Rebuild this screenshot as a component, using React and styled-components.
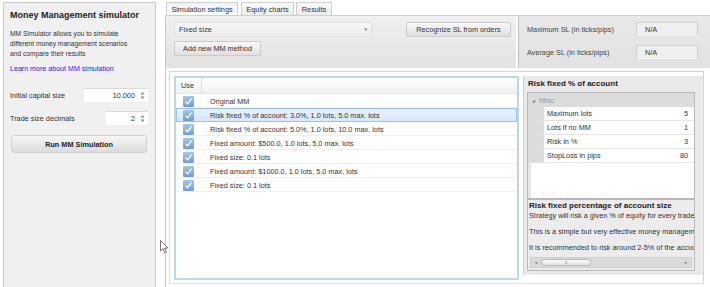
import React from "react";
import styled, { createGlobalStyle } from "styled-components";

const GlobalStyle = createGlobalStyle`
  html, body {
    margin: 0;
    padding: 0;
    background: #ffffff;
  }
  body {
    font-family: "Liberation Sans", Arial, sans-serif;
    font-size: 7.3px;
    color: #333;
    width: 710px;
    height: 287px;
    overflow: hidden;
  }
`;

const rows = [
  { text: "Original MM" },
  { text: "Risk fixed % of account: 3.0%, 1.0 lots, 5.0 max. lots", selected: true },
  { text: "Risk fixed % of account: 5.0%, 1.0 lots, 10.0 max. lots" },
  { text: "Fixed amount: $500.0, 1.0 lots, 5.0 max. lots" },
  { text: "Fixed size: 0.1 lots" },
  { text: "Fixed amount: $1000.0, 1.0 lots, 5.0 max. lots" },
  { text: "Fixed size: 0.1 lots" },
];

const props = [
  { name: "Maximum lots", value: "5" },
  { name: "Lots if no MM", value: "1" },
  { name: "Risk in %", value: "3" },
  { name: "StopLoss in pips", value: "80" },
];

function Spin() {
  return (
    <SpinArrows viewBox="0 0 5 9">
      <path d="M2.5 1 L4.5 3.6 H0.5 Z M2.5 8 L4.5 5.4 H0.5 Z" fill="#888" />
    </SpinArrows>
  );
}

function Check() {
  return (
    <CheckBox>
      <svg width="11" height="11" viewBox="0 0 11 11">
        <path d="M2.6 5.8 L4.6 7.8 L8.6 2.6" stroke="#fff" strokeWidth="1.3" fill="none" />
      </svg>
    </CheckBox>
  );
}

function App() {
  return (
    <>
      <GlobalStyle />
      <Page>
        <LeftPanel>
          <Title>Money Management simulator</Title>
          <Intro>
            MM Simulator allows you to simulate
            <br />
            different money management scenarios
            <br />
            and compare their results
          </Intro>
          <Link>Learn more about MM simulation</Link>
          <FieldRow $top={14}>
            <span>Initial capital size</span>
            <NumberBox $w={64}>
              10,000
              <Spin />
            </NumberBox>
          </FieldRow>
          <FieldRow $top={9}>
            <span>Trade size decimals</span>
            <NumberBox $w={42}>
              2
              <Spin />
            </NumberBox>
          </FieldRow>
          <RunButton>Run MM Simulation</RunButton>
        </LeftPanel>

        <Main>
          <Tabs>
            <Tab $active $w={72}>Simulation settings</Tab>
            <Tab $w={53} $ml={3}>Equity charts</Tab>
            <Tab $w={36} $ml={2}>Results</Tab>
          </Tabs>
          <Content>
            <TopRow>
              <SettingsBar>
                <BarLine>
                  <Dropdown>
                    Fixed size
                    <DropArrow>▼</DropArrow>
                  </Dropdown>
                  <GrayButton $w={105}>Recognize SL from orders</GrayButton>
                </BarLine>
                <GrayButton $w={87}>Add new MM method</GrayButton>
              </SettingsBar>
              <SlBox>
                <SlRow>
                  <span>Maximum SL (in ticks/pips)</span>
                  <SlField>N/A</SlField>
                </SlRow>
                <SlRow>
                  <span>Average SL (in ticks/pips)</span>
                  <SlField>N/A</SlField>
                </SlRow>
              </SlBox>
            </TopRow>

            <Lower>
              <Grid>
                <GridHead>
                  <UseCell>Use</UseCell>
                </GridHead>
                {rows.map((r, i) => (
                  <GridRow key={i} $selected={r.selected}>
                    <CheckCell>
                      <Check />
                    </CheckCell>
                    <span>{r.text}</span>
                  </GridRow>
                ))}
              </Grid>

              <PropsPanel>
                <PropsTitle>Risk fixed % of account</PropsTitle>
                <PropGrid>
                  <Category>
                    <CatArrow>◢</CatArrow>Misc
                  </Category>
                  {props.map((p) => (
                    <PropRow key={p.name}>
                      <PropName>{p.name}</PropName>
                      <PropValue>{p.value}</PropValue>
                    </PropRow>
                  ))}
                  <PropFiller />
                </PropGrid>
                <Description>
                  <DescText>
                    <DescTitle>Risk fixed percentage of account size</DescTitle>
                    <DescLine>Strategy will risk a given % of equity for every trade</DescLine>
                    <DescLine>This is a simple but very effective money management</DescLine>
                    <DescLine>It is recommended to risk around 2-5% of the account</DescLine>
                  </DescText>
                  <HScroll>
                    <ScrollArrow>◄</ScrollArrow>
                    <ScrollTrack>
                      <ScrollThumb>III</ScrollThumb>
                    </ScrollTrack>
                    <ScrollArrow>►</ScrollArrow>
                  </HScroll>
                </Description>
              </PropsPanel>
            </Lower>
          </Content>
        </Main>

        <Cursor viewBox="0 0 9 14" width="9" height="14">
          <path
            d="M0.5 0.5 L0.5 11 L3 8.6 L4.8 12.8 L6.4 12.1 L4.6 8 L8 8 Z"
            fill="#fff"
            stroke="#555"
            strokeWidth="0.8"
          />
        </Cursor>
      </Page>
    </>
  );
}

export default App;

const Page = styled.div`
  position: relative;
  display: flex;
  align-items: flex-start;
  width: 710px;
  height: 287px;
  padding: 2px 0 0 3px;
  box-sizing: border-box;
`;

const LeftPanel = styled.div`
  width: 153px;
  height: 290px;
  box-sizing: border-box;
  background: #f0f0f0;
  border: 1px solid #c9c9c9;
  padding: 6px 7px 0 6px;
  display: flex;
  flex-direction: column;
`;

const Title = styled.div`
  font-size: 9px;
  font-weight: bold;
  line-height: 12px;
  color: #222;
  white-space: nowrap;
`;

const Intro = styled.div`
  margin-top: 8px;
  font-size: 6.7px;
  line-height: 10px;
  color: #333;
  white-space: nowrap;
`;

const Link = styled.div`
  margin-top: 5px;
  font-size: 7.1px;
  line-height: 10px;
  color: #1a1aff;
  white-space: nowrap;
`;

const FieldRow = styled.div`
  margin-top: ${(p) => p.$top}px;
  display: flex;
  align-items: center;
  justify-content: space-between;
  height: 14px;
`;

const NumberBox = styled.div`
  width: ${(p) => p.$w}px;
  height: 14px;
  box-sizing: border-box;
  background: #fff;
  border-top: 1px solid #d8d8d8;
  display: flex;
  align-items: center;
  justify-content: flex-end;
  padding-right: 3px;
  gap: 5px;
  color: #333;
`;

const SpinArrows = styled.svg`
  width: 5px;
  height: 9px;
`;

const RunButton = styled.div`
  margin-top: 10px;
  height: 18px;
  border-radius: 3px;
  background: linear-gradient(#f6f6f6, #dcdcdc);
  border: 1px solid #d2d2d2;
  box-sizing: border-box;
  display: flex;
  align-items: center;
  justify-content: center;
  font-weight: bold;
  color: #222;
  margin-right: 1px;
  margin-left: 1px;
`;

const Main = styled.div`
  margin-left: 9px;
  flex: 1;
  display: flex;
  flex-direction: column;
`;

const Tabs = styled.div`
  display: flex;
  height: 13px;
  padding-left: 1px;
`;

const Tab = styled.div`
  width: ${(p) => p.$w}px;
  margin-left: ${(p) => p.$ml || 0}px;
  box-sizing: border-box;
  border: 1px solid #cfcfcf;
  border-bottom: none;
  background: ${(p) => (p.$active ? "linear-gradient(#eaf3fb, #fbfdff)" : "linear-gradient(#fafafa, #ececec)")};
  display: flex;
  align-items: center;
  justify-content: center;
  color: #333;
  white-space: nowrap;
`;

const Content = styled.div`
  height: 272px;
  border-top: 1px solid #d0d0d0;
  border-left: 1px solid #c8c8c8;
  display: flex;
  flex-direction: column;
`;

const TopRow = styled.div`
  display: flex;
  height: 52px;
`;

const SettingsBar = styled.div`
  width: 350px;
  background: linear-gradient(#f0f0f0, #e2e2e2);
  padding: 6px 5px 0 8px;
  box-sizing: border-box;
  display: flex;
  flex-direction: column;
  gap: 4px;
`;

const BarLine = styled.div`
  display: flex;
  justify-content: space-between;
`;

const Dropdown = styled.div`
  width: 198px;
  height: 15px;
  box-sizing: border-box;
  background: linear-gradient(#f7f7f7, #ececec);
  border: 1px solid #e0e0e0;
  display: flex;
  align-items: center;
  justify-content: space-between;
  padding: 0 3px 0 4px;
  color: #333;
`;

const DropArrow = styled.span`
  font-size: 4.5px;
  color: #777;
`;

const GrayButton = styled.div`
  width: ${(p) => p.$w}px;
  height: 15px;
  box-sizing: border-box;
  border: 1px solid #cacaca;
  border-radius: 2px;
  background: linear-gradient(#f8f8f8, #e0e0e0);
  display: flex;
  align-items: center;
  justify-content: center;
  color: #333;
  white-space: nowrap;
`;

const SlBox = styled.div`
  margin-left: 2px;
  flex: 1;
  border-left: 1px solid #bcbcbc;
  background: linear-gradient(#e8e8e8, #e2e2e2);
  padding: 6px 12px 0 8px;
  box-sizing: border-box;
  display: flex;
  flex-direction: column;
  gap: 9px;
`;

const SlRow = styled.div`
  display: flex;
  align-items: center;
  justify-content: space-between;
  height: 14px;
  color: #444;
`;

const SlField = styled.div`
  width: 62px;
  height: 14px;
  box-sizing: border-box;
  background: #efefef;
  border: 1px solid #cfcfcf;
  border-bottom-color: #f4f4f4;
  padding-left: 8px;
  display: flex;
  align-items: center;
  color: #333;
`;

const Lower = styled.div`
  margin: 3px 0 0 3px;
  width: 535px;
  height: 213px;
  box-sizing: border-box;
  border: 1px solid #d6d6d6;
  border-bottom-color: #e2e2e2;
  padding: 4px 0 4px 4px;
  display: flex;
  gap: 4px;
`;

const Grid = styled.div`
  width: 346px;
  height: 204px;
  box-sizing: border-box;
  border: 2px solid #bcd6f0;
  background: #fff;
  display: flex;
  flex-direction: column;
`;

const GridHead = styled.div`
  height: 15px;
  flex-shrink: 0;
  background: linear-gradient(#ffffff, #f0f0f0);
  border-bottom: 1px solid #e4e4e4;
  display: flex;
`;

const UseCell = styled.div`
  width: 26px;
  border-right: 1px solid #dcdcdc;
  display: flex;
  align-items: center;
  padding-left: 5px;
  box-sizing: border-box;
  color: #333;
`;

const GridRow = styled.div`
  height: 14px;
  flex-shrink: 0;
  box-sizing: border-box;
  display: flex;
  align-items: center;
  white-space: nowrap;
  color: #333;
  background: ${(p) => (p.$selected ? "linear-gradient(#e6f1fd, #d6e8fb)" : "#fff")};
  border: 1px solid ${(p) => (p.$selected ? "#9cc3ec" : "transparent")};
  border-bottom-color: ${(p) => (p.$selected ? "#9cc3ec" : "#f0f0f0")};
`;

const CheckCell = styled.div`
  width: 33px;
  padding-left: 6px;
  box-sizing: border-box;
  display: flex;
  align-items: center;
`;

const CheckBox = styled.div`
  width: 11px;
  height: 11px;
  box-sizing: border-box;
  border-radius: 1px;
  background: linear-gradient(#a6c7ee, #6e9dd8);
  display: flex;
  align-items: center;
  justify-content: center;
`;

const PropsPanel = styled.div`
  width: 180px;
  height: 199px;
  box-sizing: border-box;
  background: #e9e9e9;
  border-left: 1px solid #d0d0d0;
  padding: 2px 8px 4px 3px;
  display: flex;
  flex-direction: column;
`;

const PropsTitle = styled.div`
  font-size: 8px;
  font-weight: bold;
  line-height: 12px;
  color: #222;
  padding-left: 1px;
  margin-bottom: 2px;
  white-space: nowrap;
`;

const PropGrid = styled.div`
  height: 108px;
  box-sizing: border-box;
  border: 1px solid #b8b8b8;
  background: #fff;
  display: flex;
  flex-direction: column;
`;

const Category = styled.div`
  height: 14px;
  flex-shrink: 0;
  background: #dcdcdc;
  color: #9a9a9a;
  display: flex;
  align-items: center;
  padding-left: 4px;
  font-size: 7.5px;
`;

const CatArrow = styled.span`
  font-size: 4px;
  margin-right: 4px;
  color: #777;
`;

const PropRow = styled.div`
  height: 14px;
  flex-shrink: 0;
  display: flex;
  border-left: 16px solid #dcdcdc;
  border-bottom: 1px solid #e6e6e6;
  box-sizing: border-box;
`;

const PropName = styled.div`
  flex: 1;
  display: flex;
  align-items: center;
  padding-left: 3px;
  color: #333;
  white-space: nowrap;
`;

const PropValue = styled.div`
  display: flex;
  align-items: center;
  padding-right: 6px;
  color: #333;
`;

const PropFiller = styled.div`
  flex: 1;
  border-left: 3px solid #e6e6e6;
`;

const Description = styled.div`
  margin-top: 0;
  height: 72px;
  box-sizing: border-box;
  border: 1px solid #b8b8b8;
  background: #ececec;
  display: flex;
  flex-direction: column;
  overflow: hidden;
`;

const DescText = styled.div`
  flex: 1;
  padding: 1px 0 0 1px;
  overflow: hidden;
  white-space: nowrap;
`;

const DescTitle = styled.div`
  font-size: 8px;
  font-weight: bold;
  line-height: 10px;
  color: #222;
`;

const DescLine = styled.div`
  line-height: 10px;
  color: #333;
  margin-bottom: 6px;
`;

const HScroll = styled.div`
  height: 9px;
  flex-shrink: 0;
  margin: 0 2px 2px 2px;
  display: flex;
  align-items: center;
  background: #dadada;
  border: 1px solid #cfcfcf;
`;

const ScrollArrow = styled.span`
  font-size: 4px;
  color: #777;
  width: 10px;
  text-align: center;
`;

const ScrollTrack = styled.div`
  flex: 1;
  height: 100%;
  display: flex;
  align-items: center;
`;

const ScrollThumb = styled.div`
  width: 50px;
  height: 7px;
  border-radius: 4px;
  background: linear-gradient(#fbfbfb, #e4e4e4);
  border: 1px solid #b8b8b8;
  box-sizing: border-box;
  font-size: 4px;
  color: #999;
  display: flex;
  align-items: center;
  justify-content: center;
  letter-spacing: -0.5px;
`;

const Cursor = styled.svg`
  position: absolute;
  left: 160px;
  top: 240px;
`;
